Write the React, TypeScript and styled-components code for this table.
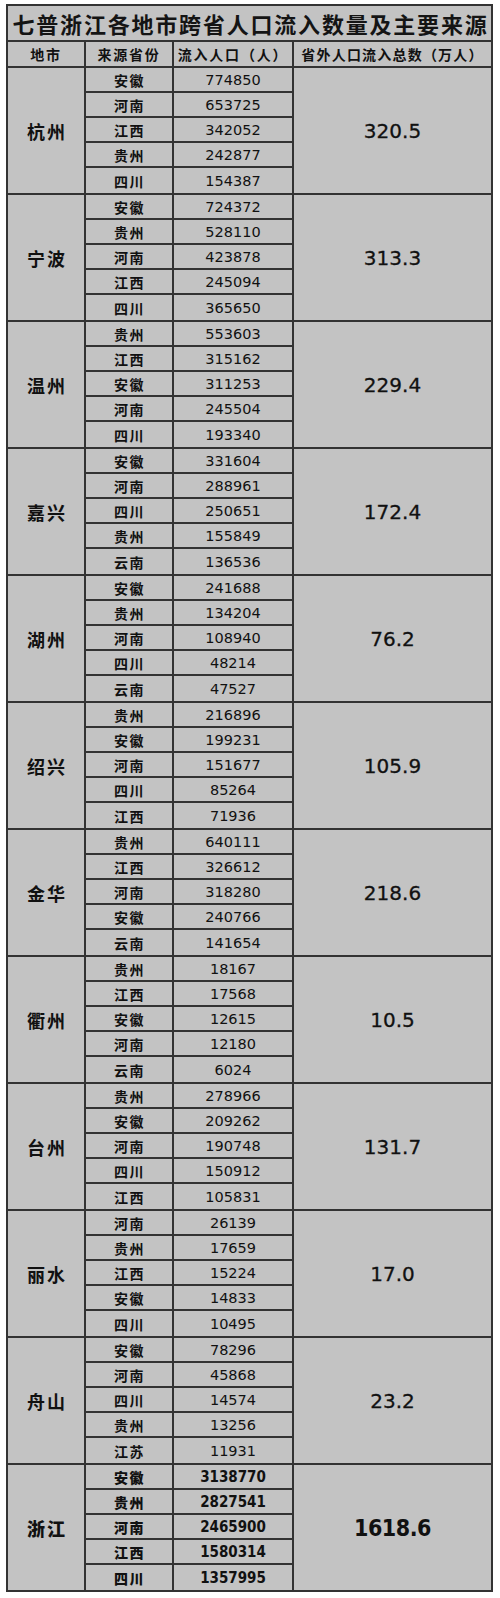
import React from "react";
import styled, { createGlobalStyle } from "styled-components";

const Global = createGlobalStyle`
  html, body { margin: 0; padding: 0; background: #ffffff; }
  body { font-family: "Noto Sans CJK SC", "Noto Sans", sans-serif; color: #111; }
`;

const LINE = "#333333";
const BG = "#c3c3c3";
const CJK = `"Noto Sans CJK SC", "Noto Sans CJK TC", sans-serif`;
const NUM = `"DejaVu Sans", "Noto Sans", sans-serif`;

const Sheet = styled.div`
  margin: 4px 0 0 6px;
  width: 487px;
  box-sizing: border-box;
  border: 2px solid ${LINE};
  background: ${BG};
`;

const Title = styled.div`
  height: 36px;
  box-sizing: border-box;
  border-bottom: 2px solid ${LINE};
  display: flex;
  align-items: center;
  justify-content: center;
  font-family: ${CJK};
  font-weight: 700;
  font-size: 22px;
  letter-spacing: 1.8px;
  padding-left: 2px;
  color: #141414;
`;

const Columns = `
  display: grid;
  grid-template-columns: 78px 88px 120px 1fr;
`;

const HeaderRow = styled.div`
  ${Columns}
  height: 26px;
  box-sizing: border-box;
  border-bottom: 2px solid ${LINE};
`;

const HeadCell = styled.div<{ $last?: boolean }>`
  display: flex;
  align-items: center;
  justify-content: center;
  box-sizing: border-box;
  border-right: ${(p) => (p.$last ? "none" : `2px solid ${LINE}`)};
  font-family: ${CJK};
  font-weight: 700;
  font-size: 14px;
  letter-spacing: ${(p) => (p.$last ? "1.2px" : "1.8px")};
  white-space: nowrap;
`;

const Group = styled.div`
  ${Columns}
  grid-template-rows: repeat(5, 1fr);
  height: 127px;
  box-sizing: border-box;
  border-bottom: 2px solid ${LINE};
  &:last-child {
    border-bottom: none;
    height: 125px;
  }
`;

const City = styled.div<{ $strong?: boolean }>`
  grid-column: 1;
  grid-row: 1 / span 5;
  display: flex;
  align-items: center;
  justify-content: center;
  box-sizing: border-box;
  border-right: 2px solid ${LINE};
  font-family: ${CJK};
  font-weight: ${(p) => (p.$strong ? 900 : 700)};
  font-size: 18px;
  letter-spacing: 2px;
  padding-left: 2px;
`;

const Total = styled.div<{ $strong?: boolean }>`
  grid-column: 4;
  grid-row: 1 / span 5;
  display: flex;
  align-items: center;
  justify-content: center;
  font-family: ${(p) => (p.$strong ? `"DejaVu Sans Condensed", ${NUM}` : NUM)};
  font-weight: ${(p) => (p.$strong ? 700 : 400)};
  font-size: ${(p) => (p.$strong ? "23px" : "20px")};
  letter-spacing: ${(p) => (p.$strong ? "-0.5px" : "0")};
  -webkit-text-stroke: ${(p) => (p.$strong ? "0" : "0.3px #111")};
  color: #111;
`;

const Province = styled.div<{ $end?: boolean; $strong?: boolean }>`
  grid-column: 2;
  display: flex;
  align-items: center;
  justify-content: center;
  box-sizing: border-box;
  border-right: 2px solid ${LINE};
  border-bottom: ${(p) => (p.$end ? "none" : `2px solid ${LINE}`)};
  font-family: ${CJK};
  font-weight: ${(p) => (p.$strong ? 900 : 700)};
  font-size: 14px;
  letter-spacing: 1.5px;
  padding-left: 1px;
`;

const Count = styled.div<{ $end?: boolean; $strong?: boolean }>`
  grid-column: 3;
  display: flex;
  align-items: center;
  justify-content: center;
  box-sizing: border-box;
  border-right: 2px solid ${LINE};
  border-bottom: ${(p) => (p.$end ? "none" : `2px solid ${LINE}`)};
  font-family: ${(p) => (p.$strong ? `"DejaVu Sans Condensed", ${NUM}` : NUM)};
  font-weight: ${(p) => (p.$strong ? 700 : 400)};
  font-size: ${(p) => (p.$strong ? "15px" : "14.5px")};
  color: #111;
`;

type Entry = [string, string];
type CityData = { city: string; total: string; rows: Entry[] };

const DATA: CityData[] = [
  { city: "杭州", total: "320.5", rows: [["安徽", "774850"], ["河南", "653725"], ["江西", "342052"], ["贵州", "242877"], ["四川", "154387"]] },
  { city: "宁波", total: "313.3", rows: [["安徽", "724372"], ["贵州", "528110"], ["河南", "423878"], ["江西", "245094"], ["四川", "365650"]] },
  { city: "温州", total: "229.4", rows: [["贵州", "553603"], ["江西", "315162"], ["安徽", "311253"], ["河南", "245504"], ["四川", "193340"]] },
  { city: "嘉兴", total: "172.4", rows: [["安徽", "331604"], ["河南", "288961"], ["四川", "250651"], ["贵州", "155849"], ["云南", "136536"]] },
  { city: "湖州", total: "76.2", rows: [["安徽", "241688"], ["贵州", "134204"], ["河南", "108940"], ["四川", "48214"], ["云南", "47527"]] },
  { city: "绍兴", total: "105.9", rows: [["贵州", "216896"], ["安徽", "199231"], ["河南", "151677"], ["四川", "85264"], ["江西", "71936"]] },
  { city: "金华", total: "218.6", rows: [["贵州", "640111"], ["江西", "326612"], ["河南", "318280"], ["安徽", "240766"], ["云南", "141654"]] },
  { city: "衢州", total: "10.5", rows: [["贵州", "18167"], ["江西", "17568"], ["安徽", "12615"], ["河南", "12180"], ["云南", "6024"]] },
  { city: "台州", total: "131.7", rows: [["贵州", "278966"], ["安徽", "209262"], ["河南", "190748"], ["四川", "150912"], ["江西", "105831"]] },
  { city: "丽水", total: "17.0", rows: [["河南", "26139"], ["贵州", "17659"], ["江西", "15224"], ["安徽", "14833"], ["四川", "10495"]] },
  { city: "舟山", total: "23.2", rows: [["安徽", "78296"], ["河南", "45868"], ["四川", "14574"], ["贵州", "13256"], ["江苏", "11931"]] },
  { city: "浙江", total: "1618.6", rows: [["安徽", "3138770"], ["贵州", "2827541"], ["河南", "2465900"], ["江西", "1580314"], ["四川", "1357995"]] },
];

export default function App() {
  return (
    <>
      <Global />
      <Sheet>
        <Title>七普浙江各地市跨省人口流入数量及主要来源</Title>
        <HeaderRow>
          <HeadCell>地市</HeadCell>
          <HeadCell>来源省份</HeadCell>
          <HeadCell>流入人口（人）</HeadCell>
          <HeadCell $last>省外人口流入总数（万人）</HeadCell>
        </HeaderRow>
        {DATA.map((g, gi) => {
          const strong = gi === DATA.length - 1;
          return (
            <Group key={g.city}>
              <City $strong={strong}>{g.city}</City>
              <Total $strong={strong}>{g.total}</Total>
              {g.rows.map(([p, n], i) => (
                <React.Fragment key={p + n}>
                  <Province $end={i === 4} $strong={strong}>{p}</Province>
                  <Count $end={i === 4} $strong={strong}>{n}</Count>
                </React.Fragment>
              ))}
            </Group>
          );
        })}
      </Sheet>
    </>
  );
}
